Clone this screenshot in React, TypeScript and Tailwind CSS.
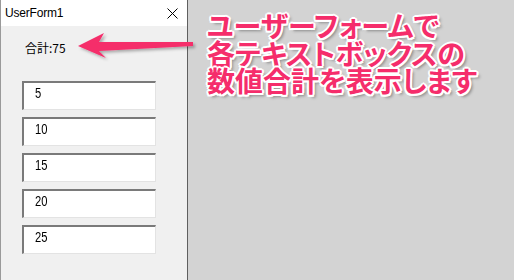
const values = [5, 10, 15, 20, 25];

const App = () => {
  return (
    <div className="relative flex w-[514px] h-[280px] overflow-hidden bg-[#d3d3d3]">
      {/* form window */}
      <div className="flex flex-col w-[188px] h-full border-l border-r border-l-[#9a9a9a] border-r-[#5f5f5f] bg-[#f0f0f0] shrink-0">
        <div className="flex items-center justify-between h-[26px] bg-white pl-[4px] pr-[9px]">
          <span className="text-[12px] text-black font-['Liberation_Sans',sans-serif] tracking-[-0.2px]">UserForm1</span>
          <svg width="11" height="11" viewBox="0 0 11 11" className="text-black">
            <path d="M0.5 0.5 L10.5 10.5 M10.5 0.5 L0.5 10.5" stroke="currentColor" strokeWidth="1" />
          </svg>
        </div>
        <div className="pl-[24px] pt-[14px] text-[12px] leading-[16px] text-black font-['Noto_Sans_CJK_JP',sans-serif]">
          合計:75
        </div>
        <div className="flex flex-col gap-[7px] pl-[21px] pt-[25px]">
          {values.map((v) => (
            <div
              key={v}
              className="w-[134px] h-[29px] bg-white border-t-2 border-l-2 border-b border-r border-t-[#7a7a7a] border-l-[#7a7a7a] border-b-[#e3e3e3] border-r-[#e3e3e3] pl-[11px] pt-[2px] text-[14px] leading-[16px] text-black font-['Liberation_Sans',sans-serif]"
            >
              <span className="inline-block scale-x-[0.8] origin-left">{v}</span>
            </div>
          ))}
        </div>
      </div>

      {/* annotation */}
      <div className="pl-[19px] pt-[12px] text-[28px] leading-[27.5px] font-bold text-[#f52d6b] font-['Noto_Sans_CJK_JP',sans-serif] [font-feature-settings:'palt'] [text-shadow:2px_0_0_#fff,-2px_0_0_#fff,0_2px_0_#fff,0_-2px_0_#fff,1.5px_1.5px_0_#fff,-1.5px_1.5px_0_#fff,1.5px_-1.5px_0_#fff,-1.5px_-1.5px_0_#fff,3px_3px_3px_rgba(0,0,0,0.35)]">
        <div>ユーザーフォームで</div>
        <div>各テキストボックスの</div>
        <div>数値合計を表示します</div>
      </div>

      <svg className="absolute left-0 top-0 pointer-events-none" width="220" height="80" viewBox="0 0 220 80">
        <defs>
          <filter id="shadow" x="-20%" y="-50%" width="140%" height="200%">
            <feDropShadow dx="2" dy="2" stdDeviation="1.5" floodColor="#000" floodOpacity="0.3" />
          </filter>
        </defs>
        <polygon
          points="78,46 104,33 99,42 193,42 193,46 99,51 106,58"
          fill="#f52d6b"
          filter="url(#shadow)"
        />
      </svg>
    </div>
  );
};

export default App;
